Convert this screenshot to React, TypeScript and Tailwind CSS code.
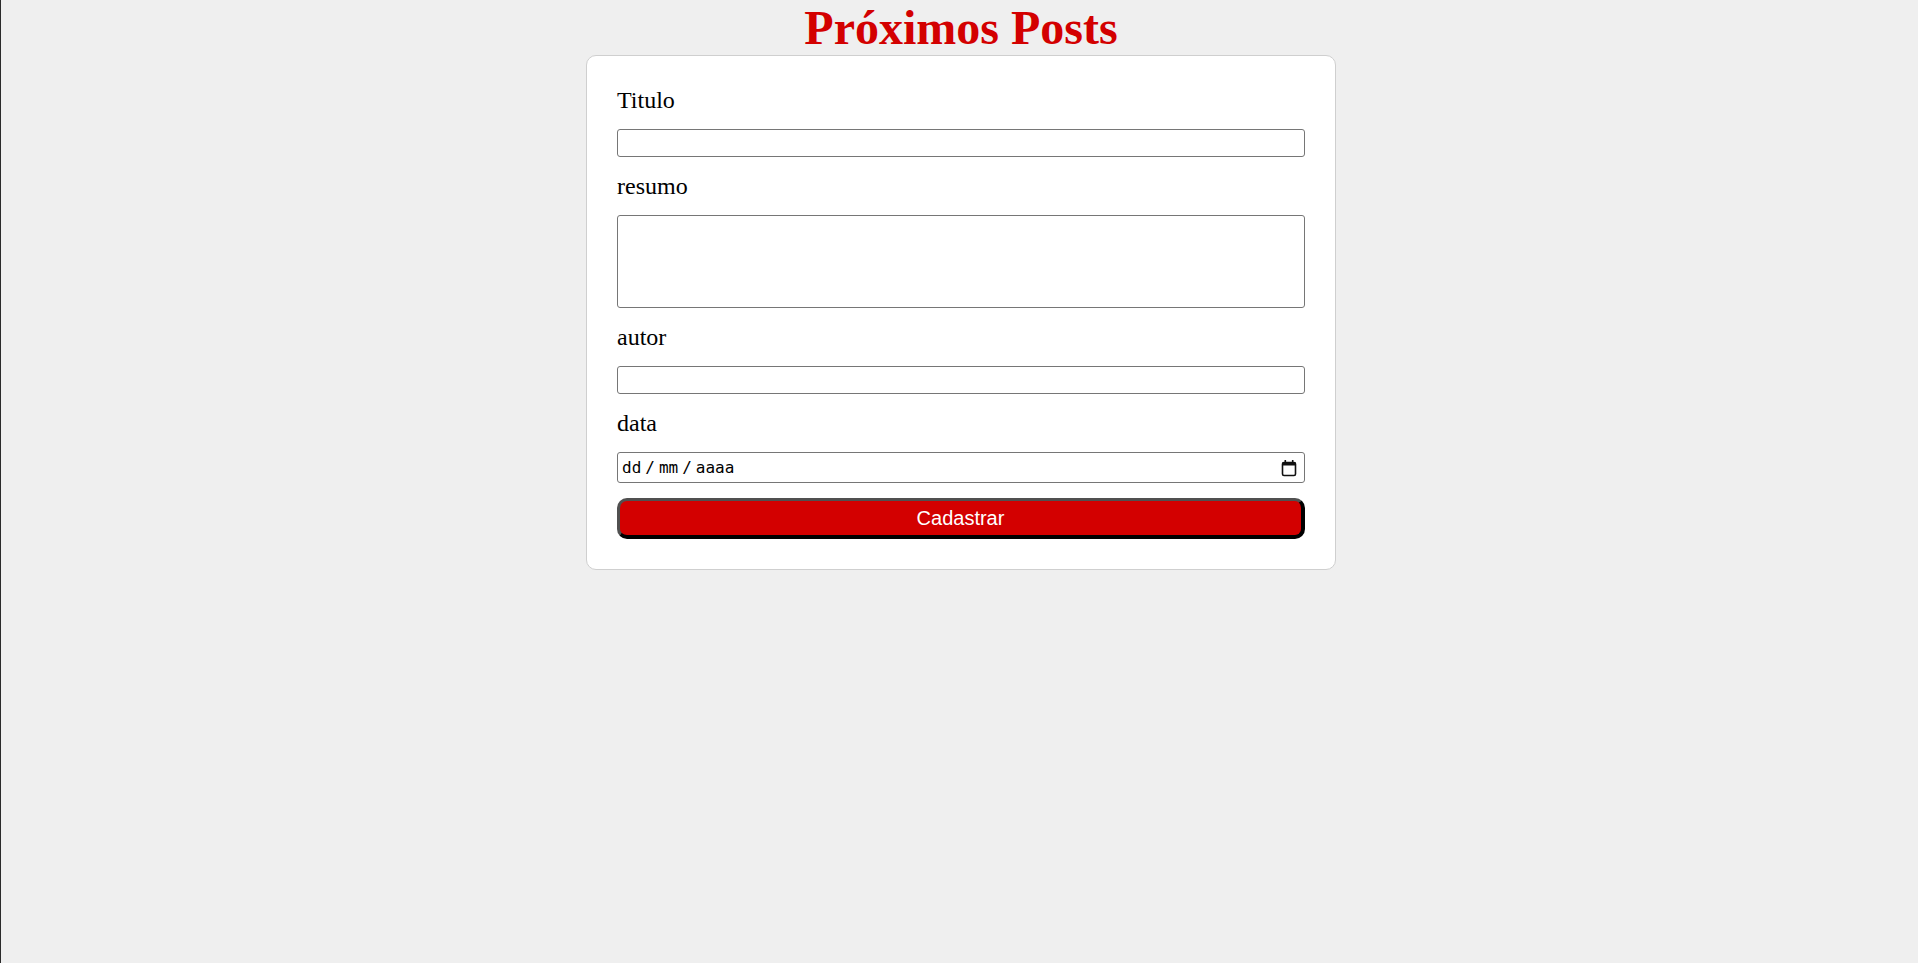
export default function App() {
  return (
    <div className="min-h-screen bg-[#efefef] pl-[4px] shadow-[inset_1px_0_0_#2b2b2b]">
      {/* Heading */}
      <h1 className="text-center text-[48px] leading-[55px] font-bold text-[#d30000] [font-family:'Liberation_Serif',serif]">
        Próximos Posts
      </h1>

      {/* Form card */}
      <form
        onSubmit={(e) => e.preventDefault()}
        className="mx-auto flex w-[750px] flex-col gap-[15px] rounded-[10px] border border-[#cfcfcf] bg-white p-[30px] [font-family:'Liberation_Serif',serif]"
      >
        <label className="text-[24px] leading-[28px] text-black">Titulo</label>
        <input
          type="text"
          className="h-[28px] w-full rounded-[3px] border border-[#767676] bg-white px-[2px]"
        />

        <label className="text-[24px] leading-[28px] text-black">resumo</label>
        <textarea className="h-[93px] w-full resize-none rounded-[3px] border border-[#767676] bg-white px-[2px]" />

        <label className="text-[24px] leading-[28px] text-black">autor</label>
        <input
          type="text"
          className="h-[28px] w-full rounded-[3px] border border-[#767676] bg-white px-[2px]"
        />

        <label className="text-[24px] leading-[28px] text-black">data</label>
        {/* date field, drawn to keep the dd/mm/aaaa format */}
        <div className="flex h-[31px] w-full items-center justify-between rounded-[3px] border border-[#767676] bg-white pl-[4px] pr-[7px] text-[16px] text-black [font-family:'DejaVu_Sans_Mono',monospace]">
          <span className="flex items-center">
            <span>dd</span>
            <span className="mx-[4px]">/</span>
            <span>mm</span>
            <span className="mx-[4px]">/</span>
            <span>aaaa</span>
          </span>
          <svg width="16" height="18" viewBox="0 0 16 18" fill="none">
            <rect x="1.5" y="3.5" width="13" height="13" rx="1.5" stroke="#111" strokeWidth="1.6" />
            <rect x="1.5" y="3.5" width="13" height="3" fill="#111" />
            <rect x="3.5" y="1" width="1.6" height="3" fill="#111" />
            <rect x="10.9" y="1" width="1.6" height="3" fill="#111" />
          </svg>
        </div>

        <button
          type="submit"
          className="h-[41px] w-full rounded-[10px] border-t-[3px] border-l-[3px] border-b-4 border-r-4 border-t-[#505050] border-l-[#505050] border-b-black border-r-black bg-[#d30000] text-[20px] text-white [font-family:'Liberation_Sans',Arial,sans-serif]"
        >
          Cadastrar
        </button>
      </form>
    </div>
  );
}
